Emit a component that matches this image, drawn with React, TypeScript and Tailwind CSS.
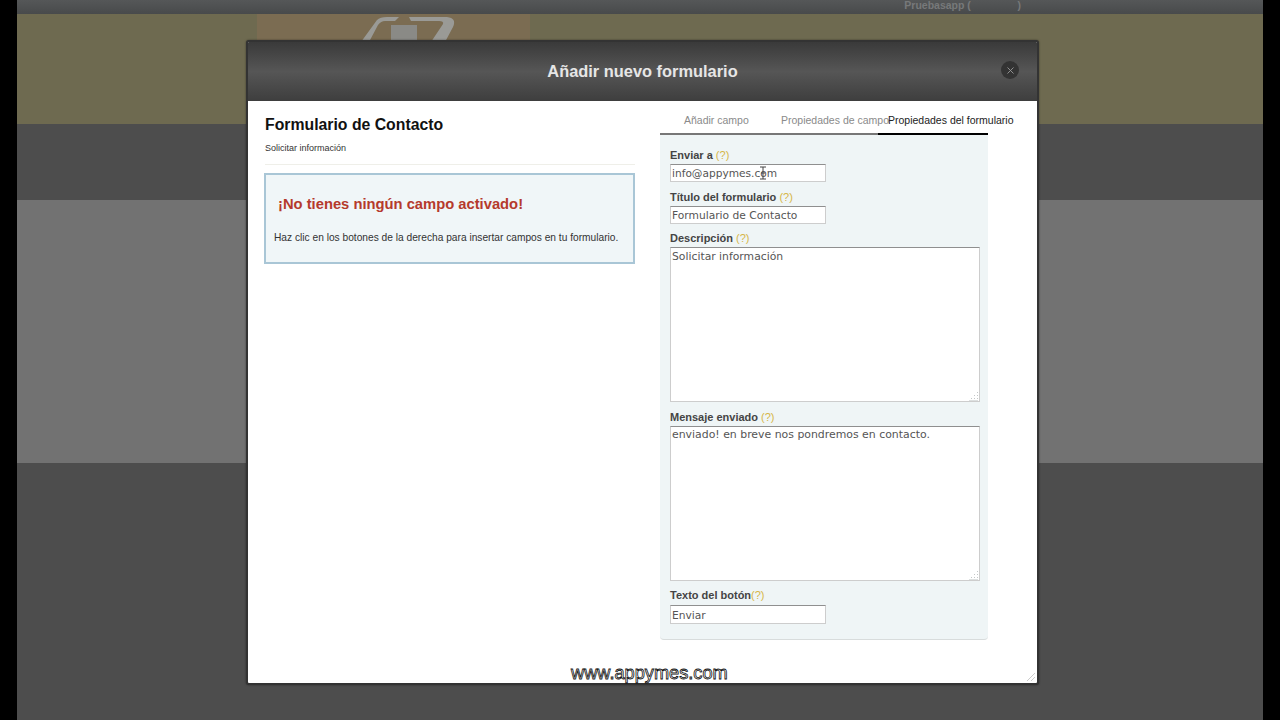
import { X } from "lucide-react";

const labelClass = "block text-[11px] leading-[13px] font-bold text-[#444]";
const fieldClass =
  "block border border-[#cdcdcd] border-t-[#8f8f8f] bg-white pl-[1px] font-['DejaVu_Sans',sans-serif] text-[#555] outline-none";

function Help() {
  return <span className="font-normal text-[#d6b648]">(?)</span>;
}

function Grip() {
  return (
    <svg className="absolute right-[1px] bottom-[1px]" width="11" height="10" viewBox="0 0 11 10" fill="#c4c8c8">
      <rect x="9" y="1" width="1" height="1" />
      <rect x="6" y="4" width="1" height="1" />
      <rect x="9" y="4" width="1" height="1" />
      <rect x="3" y="7" width="1" height="1" />
      <rect x="6" y="7" width="1" height="1" />
      <rect x="9" y="7" width="1" height="1" />
      <rect x="1" y="9" width="9" height="1" fill="#dde0e0" />
    </svg>
  );
}

function Area({ value, className, textClass }: { value: string; className: string; textClass: string }) {
  return (
    <div className={`relative w-[310px] ${className}`}>
      <textarea
        readOnly
        value={value}
        className={`${fieldClass} h-[155px] w-full resize-none ${textClass}`}
      />
      <Grip />
    </div>
  );
}

function Backdrop() {
  return (
    <div className="flex h-[720px] min-w-0 flex-col">
      <div className="flex h-[14px] shrink-0 justify-end bg-gradient-to-b from-[#555758] to-[#484a4b] pr-[242px] text-[10.5px] leading-[11px] font-bold text-[#77797a]">
        <span className="whitespace-pre">Pruebasapp (                )</span>
      </div>
      <div className="h-[110px] shrink-0 bg-[#6e6a50] pl-[240px]">
        <div className="h-full w-[273px] bg-[#7b6c52] pl-[100px]">
          <svg width="104" height="30" viewBox="0 0 104 30" fill="none">
            <path d="M4 28 L20 6 Q23 3 30 3 L42 3 L38 7 L28 7 Q24 7 21 11 L12 28 Z" fill="#9a9a96" />
            <path d="M52 3 L90 3 Q100 4 96 13 L88 28 L74 28 L86 10 Q87 7 82 7 L54 7 Z" fill="#9a9a96" />
            <rect x="34" y="11" width="26" height="19" fill="#8a8a86" />
          </svg>
        </div>
      </div>
      <div className="h-[76px] shrink-0 bg-[#4d4d4d]" />
      <div className="h-[263px] shrink-0 bg-[#727272]" />
      <div className="flex-1 bg-[#4d4d4d]" />
    </div>
  );
}

function FormPreview() {
  return (
    <div className="w-[370px] shrink-0 pt-[14px]">
      <h2 className="text-[15.8px] leading-[20px] font-bold text-[#111]">Formulario de Contacto</h2>
      <p className="mt-[7px] text-[9px] leading-[12px] text-[#333]">Solicitar información</p>
      <div className="mt-[10px] border-t border-[#efefe9]" />
      <div className="mt-[8px] -ml-px h-[91px] border-2 border-[#a9c6d6] bg-[#f0f6f8] pt-[19px] pl-[8px]">
        <h3 className="pl-[4px] text-[14.75px] leading-[20px] font-bold text-[#b53a2c]">¡No tienes ningún campo activado!</h3>
        <p className="mt-[17px] text-[10.2px] leading-[14px] whitespace-nowrap text-[#333]">
          Haz clic en los botones de la derecha para insertar campos en tu formulario.
        </p>
      </div>
    </div>
  );
}

function Settings() {
  return (
    <div className="relative w-[328px] shrink-0 pt-[12px]">
      <div className="flex h-[22px] border-b-2 border-[#777] text-[10.5px] leading-[14px] whitespace-nowrap">
        <span className="ml-[24px] w-[97px] shrink-0 text-[#8a8a8a]">Añadir campo</span>
        <span className="w-[97px] shrink-0 text-[#8a8a8a]">Propiedades de campo</span>
        <span className="relative -mb-[2px] w-[110px] shrink-0 border-b-2 border-black pl-[10px] text-[#222]">Propiedades del formulario</span>
      </div>
      <div className="h-[505px] rounded-b-sm border-b border-[#d8dcdc] bg-[#eff5f6] pt-[14px] pl-[10px]">
        <label className={labelClass}>Enviar a <Help /></label>
        <input readOnly value="info@appymes.com" className={`${fieldClass} mt-[2px] h-[18px] w-[156px] text-[10.6px]`} />
        <label className={`${labelClass} mt-[9px]`}>Título del formulario <Help /></label>
        <input readOnly value="Formulario de Contacto" className={`${fieldClass} mt-[2px] h-[18px] w-[156px] text-[10.7px]`} />
        <label className={`${labelClass} mt-[8px]`}>Descripción <Help /></label>
        <Area value="Solicitar información" className="mt-[2px]" textClass="pt-[1px] text-[10.8px]" />
        <label className={`${labelClass} mt-[9px]`}>Mensaje enviado <Help /></label>
        <Area value="enviado! en breve nos pondremos en contacto." className="mt-[2px]" textClass="text-[10.9px]" />
        <label className={`${labelClass} mt-[8px]`}>Texto del botón<Help /></label>
        <input readOnly value="Enviar" className={`${fieldClass} mt-[3px] h-[19px] w-[156px] pt-[2px] text-[10.7px]`} />
      </div>
      {/* mouse cursor from the recording */}
      <svg className="absolute top-[65px] left-[99px]" width="8" height="14" viewBox="0 0 8 14" fill="none" stroke="#444" strokeWidth="1">
        <path d="M1 1h6M4 1v12M1 13h6M2 7h4" />
      </svg>
    </div>
  );
}

export default function App() {
  return (
    <div className="relative grid h-[720px] w-[1280px] grid-cols-[17px_1fr_17px] overflow-hidden bg-black font-['Liberation_Sans',sans-serif]">
      <div />
      <Backdrop />
      <div />

      <div className="absolute top-[40px] left-[246px] h-[645px] w-[793px] overflow-hidden rounded-[3px] border-2 border-[#333] bg-white shadow-[0_0_2px_rgba(0,0,0,0.5)]">
        <div className="relative flex h-[59px] items-center justify-center bg-gradient-to-b from-[#3a3a3a] via-[#565656] to-[#3e3e3e]">
          <h1 className="text-[16.4px] font-bold text-[#e6e6e6]">Añadir nuevo formulario</h1>
          <button className="absolute top-[19px] right-[18px] flex size-[18px] items-center justify-center rounded-full bg-[#333] text-[#999]">
            <X size={11} />
          </button>
        </div>
        <div className="flex items-start pl-[17px]">
          <FormPreview />
          <div className="ml-[25px]">
            <Settings />
          </div>
        </div>
        <svg className="absolute right-[1px] bottom-[1px]" width="10" height="10" viewBox="0 0 10 10" stroke="#ccc" strokeWidth="1">
          <path d="M1 9L9 1M5 9L9 5" />
        </svg>
      </div>

      <div className="absolute top-[663px] left-[571px] text-[18.2px] leading-[20px] text-white [-webkit-text-stroke:0.8px_#111]">
        www.appymes.com
      </div>
    </div>
  );
}
